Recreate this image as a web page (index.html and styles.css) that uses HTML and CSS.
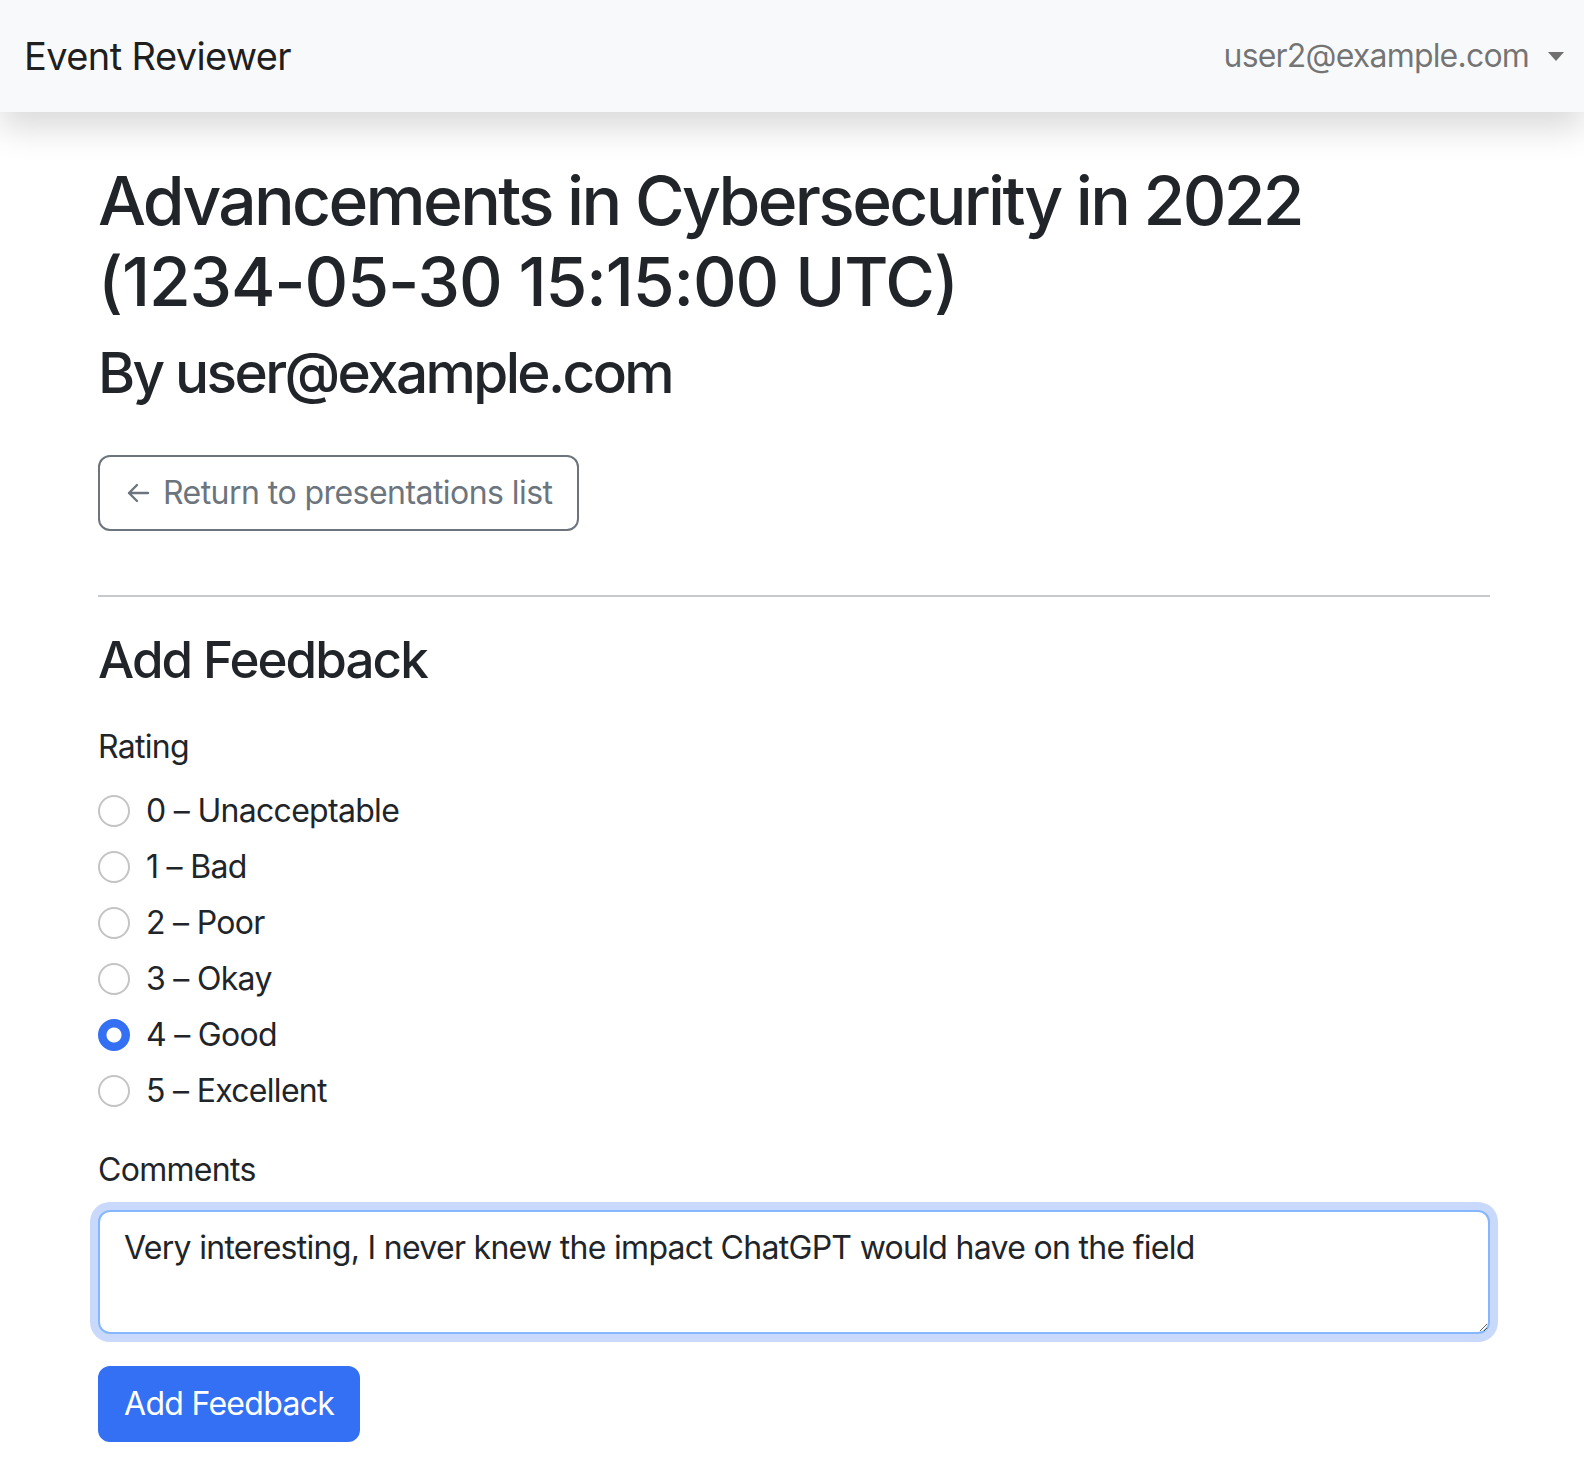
FILE: index.html
```html
<!DOCTYPE html>
<html lang="en">
<head>
<meta charset="utf-8">
<title>Event Reviewer</title>
<link rel="stylesheet" href="styles.css">
</head>
<body>
<nav class="navbar">
  <a class="brand" href="#">Event Reviewer</a>
  <div class="user-menu">
    <span class="user-name">user2@example.com</span>
    <span class="caret"></span>
  </div>
</nav>
<main class="container">
  <h1 class="title">Advancements in Cybersecurity in 2022 <span class="title-date">(1234-05-30 15:15:00 UTC)</span></h1>
  <h2 class="author">By user@example.com</h2>
  <div class="back-row">
    <a class="btn btn-outline" href="#">
      <svg class="arrow" viewBox="0 0 24 22" width="24" height="22" aria-hidden="true"><path d="M22 11H3M11 3L3 11L11 19" fill="none" stroke="currentColor" stroke-width="2.4" stroke-linecap="round" stroke-linejoin="round"/></svg>
      <span>Return to presentations list</span>
    </a>
  </div>
  <hr class="divider">
  <h3 class="section-title">Add Feedback</h3>
  <form class="feedback-form">
    <div class="field field-rating">
      <div class="field-label">Rating</div>
      <label class="check"><input type="radio" name="rating" value="0"><span>0 – Unacceptable</span></label>
      <label class="check"><input type="radio" name="rating" value="1"><span>1 – Bad</span></label>
      <label class="check"><input type="radio" name="rating" value="2"><span>2 – Poor</span></label>
      <label class="check"><input type="radio" name="rating" value="3"><span>3 – Okay</span></label>
      <label class="check"><input type="radio" name="rating" value="4" checked><span>4 – Good</span></label>
      <label class="check"><input type="radio" name="rating" value="5"><span>5 – Excellent</span></label>
    </div>
    <div class="field field-comments">
      <label class="field-label" for="comments">Comments</label>
      <textarea id="comments" class="textarea" rows="2">Very interesting, I never knew the impact ChatGPT would have on the field</textarea>
    </div>
    <button type="button" class="btn btn-primary">Add Feedback</button>
  </form>
</main>
</body>
</html>
```

FILE: styles.css
```css
* { box-sizing: border-box; }
html, body { margin: 0; padding: 0; }
body {
  font-family: "Inter", "Roboto", "Noto Sans", sans-serif;
  font-size: 32px;
  line-height: 1.5;
  letter-spacing: -0.7px;
  color: #212529;
  background: #fff;
}
.navbar {
  height: 112px;
  background: #f8f9fa;
  display: flex;
  align-items: center;
  justify-content: space-between;
  padding: 0 20px 0 24px;
  box-shadow: 0 16px 32px rgba(0,0,0,.15);
  position: relative;
}
.brand {
  font-size: 38px;
  color: rgba(0,0,0,.9);
  text-decoration: none;
  letter-spacing: -0.6px;
}
.user-menu {
  display: flex;
  align-items: center;
  color: rgba(0,0,0,.55);
  letter-spacing: -0.8px;
}
.caret {
  margin-left: 19px;
  width: 0; height: 0;
  border-top: 9px solid rgba(0,0,0,.55);
  border-left: 8px solid transparent;
  border-right: 8px solid transparent;
}
.container {
  max-width: 1440px;
  margin: 48px auto 0;
  padding: 0 22px 0 26px;
}
.title {
  font-size: 67.76px;
  line-height: 1.2;
  font-weight: 500;
  margin: 0 0 16px;
  letter-spacing: -2.7px;
}
.title-date { letter-spacing: -1.1px; }
.author {
  font-size: 56.66px;
  line-height: 1.2;
  font-weight: 500;
  margin: 0 0 16px;
  letter-spacing: -2.6px;
}
.back-row { margin-top: 48px; }
.btn {
  display: inline-flex;
  align-items: center;
  gap: 11px;
  height: 76px;
  padding: 0 24px;
  border-radius: 12px;
  font: inherit;
  letter-spacing: -0.7px;
  text-decoration: none;
  border: 2px solid transparent;
  cursor: pointer;
}
.btn-outline {
  color: #6c757d;
  border-color: #6c757d;
  gap: 13px;
  padding: 0 25px 0 26px;
  letter-spacing: -0.55px;
}
.arrow { flex: none; }
.divider {
  border: 0;
  border-top: 2px solid #c8c9ca;
  margin: 64px 0 32px;
}
.section-title {
  font-size: 51.1px;
  line-height: 1.2;
  font-weight: 500;
  margin: 0 0 33px;
  letter-spacing: -1.9px;
}
.field-rating { margin-bottom: 31px; }
.field-comments { margin-bottom: 32px; }
.field-label {
  display: block;
  margin-bottom: 16px;
}
.check {
  display: flex;
  align-items: center;
  gap: 16px;
  height: 48px;
  margin-bottom: 8px;
}
.check input {
  appearance: none;
  -webkit-appearance: none;
  width: 32px;
  height: 32px;
  margin: 0;
  border: 2px solid #c4c4c4;
  border-radius: 50%;
  background: #fff;
}
.check input:checked {
  border-color: #3470f3;
  background: radial-gradient(circle, #fff 0 7px, #3470f3 8px);
}
.textarea {
  display: block;
  width: 100%;
  height: 124px;
  padding: 12px 24px;
  font: inherit;
  letter-spacing: -0.7px;
  color: #212529;
  border: 2px solid #86b7fe;
  border-radius: 12px;
  box-shadow: 0 0 0 8px #c9d9fc;
  outline: none;
  resize: vertical;
}
.btn-primary {
  background: #3470f3;
  border-color: #3470f3;
  color: #fff;
}
```
